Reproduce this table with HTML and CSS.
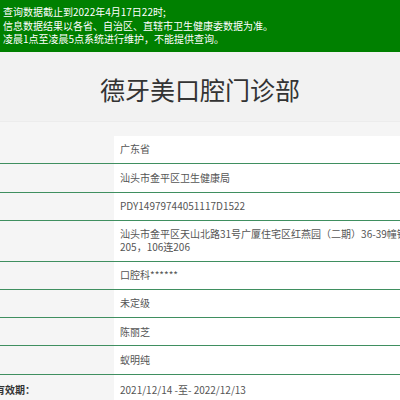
FILE: index.html
```html
<!DOCTYPE html>
<html lang="zh-CN">
<head>
<meta charset="utf-8">
<title>德牙美口腔门诊部</title>
<link rel="stylesheet" href="styles.css">
</head>
<body>
<div class="notice">
  <p>查询数据截止到2022年4月17日22时;</p>
  <p>信息数据结果以各省、自治区、直辖市卫生健康委数据为准。</p>
  <p>凌晨1点至凌晨5点系统进行维护，不能提供查询。</p>
</div>
<div class="title-box"><h1 class="title">德牙美口腔门诊部</h1></div>
<div class="sheet">
  <div class="grid">
    <div class="label"></div><div class="value">广东省</div>
    <div class="label"></div><div class="value">汕头市金平区卫生健康局</div>
    <div class="label"></div><div class="value">PDY14979744051117D1522</div>
    <div class="label"></div><div class="value">汕头市金平区天山北路31号广厦住宅区红燕园（二期）36-39幢铺205，106连206</div>
    <div class="label"></div><div class="value">口腔科******</div>
    <div class="label"></div><div class="value">未定级</div>
    <div class="label"></div><div class="value">陈丽芝</div>
    <div class="label"></div><div class="value">蚁明纯</div>
    <div class="label"><span class="label-text">执业许可证有效期：</span></div><div class="value">2021/12/14 -至- 2022/12/13</div>
  </div>
</div>
</body>
</html>
```
FILE: styles.css
```css
html, body {
  margin: 0;
  padding: 0;
}
body {
  background: #f5f5f5;
  font-family: "Noto Sans CJK SC", "Noto Sans", sans-serif;
  overflow: hidden;
}
.notice {
  background: #008000;
  color: #ffffff;
  font-size: 10px;
  line-height: 13.5px;
  padding: 5px 3px 6.5px;
}
.notice p {
  margin: 0;
}
.title-box {
  background: #f2f2f2;
  height: 69px;
  border-bottom: 1px solid #ececec;
  display: flex;
  align-items: center;
  justify-content: center;
}
.title {
  margin: 0;
  font-size: 25px;
  font-weight: normal;
  color: #333333;
  line-height: 30px;
  padding-top: 4px;
}
.sheet {
  margin-top: 14px;
  overflow: hidden;
}
.grid {
  width: 426px;
  display: grid;
  grid-template-columns: 114px 1fr;
  font-size: 10px;
  line-height: 12.5px;
}
.label, .value {
  padding: 7.4px 6px;
  border-bottom: 1px solid #3f8f60;
}
.label {
  background: #f5f5f5;
  overflow: hidden;
  padding-left: 0;
  padding-right: 0;
}
.label-text {
  display: block;
  white-space: nowrap;
  margin-left: -55px;
  margin-top: 2px;
  font-weight: bold;
  color: #333333;
}
.value {
  background: #ffffff;
  color: #555555;
}
.grid .value:last-child {
  padding-top: 9.4px;
}
```
